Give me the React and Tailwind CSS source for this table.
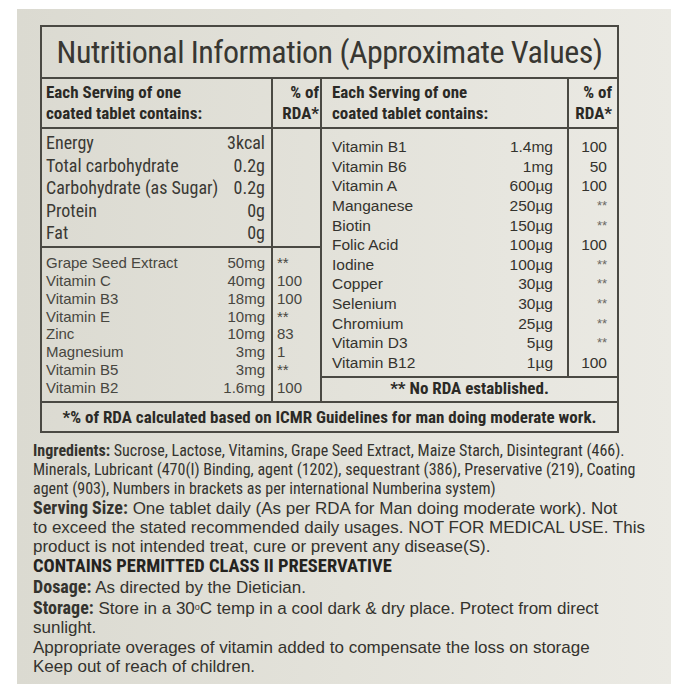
import React from 'react';

const NARROW = "font-['Roboto_Condensed','Open_Sans',sans-serif]";
const SANS = "font-['Liberation_Sans',Arial,sans-serif]";

const basics = [
  ['Energy', '3kcal'],
  ['Total carbohydrate', '0.2g'],
  ['Carbohydrate (as Sugar)', '0.2g'],
  ['Protein', '0g'],
  ['Fat', '0g'],
];

const leftNutrients = [
  ['Grape Seed Extract', '50mg', '**'],
  ['Vitamin C', '40mg', '100'],
  ['Vitamin B3', '18mg', '100'],
  ['Vitamin E', '10mg', '**'],
  ['Zinc', '10mg', '83'],
  ['Magnesium', '3mg', '1'],
  ['Vitamin B5', '3mg', '**'],
  ['Vitamin B2', '1.6mg', '100'],
];

const rightNutrients = [
  ['Vitamin B1', '1.4mg', '100'],
  ['Vitamin B6', '1mg', '50'],
  ['Vitamin A', '600µg', '100'],
  ['Manganese', '250µg', '**'],
  ['Biotin', '150µg', '**'],
  ['Folic Acid', '100µg', '100'],
  ['Iodine', '100µg', '**'],
  ['Copper', '30µg', '**'],
  ['Selenium', '30µg', '**'],
  ['Chromium', '25µg', '**'],
  ['Vitamin D3', '5µg', '**'],
  ['Vitamin B12', '1µg', '100'],
];

function HeaderCell({ className }) {
  return (
    <div className={`${NARROW} font-bold text-[17px] leading-[21px] text-[#2b2a26] ${className}`}>
      <div>Each Serving of one</div>
      <div>coated tablet contains:</div>
    </div>
  );
}

function RdaHead({ className }) {
  return (
    <div className={`${NARROW} font-bold text-[17px] leading-[21px] text-[#2b2a26] text-right ${className}`}>
      <div>% of</div>
      <div>RDA*</div>
    </div>
  );
}

export default function App() {
  return (
    <div className="min-h-[700px] bg-white pt-[9px] pl-[17px] overflow-hidden">
      <div className="w-[654px] h-[675px] bg-gradient-to-r from-[#dbdad1] via-[#e3e2da] to-[#ebeae4] pt-[16px] pl-[16px] overflow-hidden">
        {/* table */}
        <div className="ml-[7px] w-[579px] border-2 border-[#4a4943]">
          <div className={`${NARROW} h-[52px] border-b-2 border-[#4a4943] flex items-center justify-center text-[32px] tracking-[-0.5px] text-[#383732] whitespace-nowrap`}>
            Nutritional Information (Approximate Values)
          </div>

          <div className="flex h-[50px] border-b-2 border-[#4a4943]">
            <HeaderCell className="w-[231px] border-r-2 border-[#4a4943] pl-[4px] pt-[3px]" />
            <RdaHead className="w-[49px] border-r-2 border-[#4a4943] pr-[1px] pt-[3px]" />
            <HeaderCell className="w-[247px] border-r-2 border-[#4a4943] pl-[10px] pt-[3px]" />
            <RdaHead className="w-[48px] pr-[5px] pt-[3px]" />
          </div>

          <div className="flex border-b-2 border-[#4a4943]">
            {/* left half */}
            <div className="w-[280px] border-r-2 border-[#4a4943]">
              <div className="flex h-[119px] border-b-2 border-[#4a4943]">
                <div className={`${NARROW} w-[231px] border-r-2 border-[#4a4943] pl-[4px] pr-[6px] pt-[3px] text-[18px] text-[#3a3934] whitespace-nowrap`}>
                  {basics.map(([n, v]) => (
                    <div key={n} className="flex justify-between h-[22.5px] leading-[22.5px]">
                      <span>{n}</span>
                      <span>{v}</span>
                    </div>
                  ))}
                </div>
                <div className="w-[47px]" />
              </div>
              <div className="flex h-[153px]">
                <div className={`${SANS} w-[231px] border-r-2 border-[#4a4943] pl-[4px] pr-[6px] pt-[6px] text-[15px] text-[#47463f]`}>
                  {leftNutrients.map(([n, v]) => (
                    <div key={n} className="flex justify-between h-[17.86px] leading-[17.86px]">
                      <span>{n}</span>
                      <span>{v}</span>
                    </div>
                  ))}
                </div>
                <div className={`${SANS} w-[47px] pl-[4px] pt-[6px] text-[15px] text-[#47463f]`}>
                  {leftNutrients.map(([n, , r]) => (
                    <div key={n} className="h-[17.86px] leading-[17.86px]">{r}</div>
                  ))}
                </div>
              </div>
            </div>

            {/* right half */}
            <div className="w-[295px]">
              <div className="flex h-[249px] border-b-2 border-[#4a4943]">
                <div className={`${SANS} w-[247px] border-r-2 border-[#4a4943] pl-[10px] pr-[14px] pt-[8px] text-[15.5px] text-[#34332e]`}>
                  {rightNutrients.map(([n, v]) => (
                    <div key={n} className="flex justify-between h-[19.64px] leading-[19.64px]">
                      <span>{n}</span>
                      <span>{v}</span>
                    </div>
                  ))}
                </div>
                <div className={`${SANS} w-[48px] pr-[10px] pt-[8px] text-[15.5px] text-[#34332e] text-right`}>
                  {rightNutrients.map(([n, , r]) => (
                    <div key={n} className={`h-[19.64px] leading-[19.64px] ${r === '**' ? 'text-[#6a6963] text-[13px]' : ''}`}>{r}</div>
                  ))}
                </div>
              </div>
              <div className={`${NARROW} h-[21px] leading-[21px] font-bold text-[17px] text-[#2b2a26] text-center whitespace-nowrap`}>
                ** No RDA established.
              </div>
            </div>
          </div>

          <div className={`${NARROW} h-[28px] leading-[28px] font-bold text-[17px] text-[#2b2a26] text-center whitespace-nowrap`}>
            *% of RDA calculated based on ICMR Guidelines for man doing moderate work.
          </div>
        </div>

        {/* text below the table */}
        <div className="mt-[8px] text-[#34332e] whitespace-nowrap">
          <div className={`${NARROW} text-[16px] leading-[19px]`}>
            <div><span className="font-bold">Ingredients:</span> Sucrose, Lactose, Vitamins, Grape Seed Extract, Maize Starch, Disintegrant (466).</div>
            <div>Minerals, Lubricant (470(I) Binding, agent (1202), sequestrant (386), Preservative (219), Coating</div>
            <div>agent (903), Numbers in brackets as per international Numberina system)</div>
          </div>
          <div className={`${SANS} text-[17px] leading-[19px]`}>
            <div><span className={`${NARROW} font-bold text-[18px]`}>Serving Size:</span> One tablet daily (As per RDA for Man doing moderate work). Not</div>
            <div>to exceed the stated recommended daily usages. NOT FOR MEDICAL USE. This</div>
            <div>product is not intended treat, cure or prevent any disease(S).</div>
          </div>
          <div className={`${NARROW} font-bold text-[18.5px] leading-[21px] text-[#24231f]`}>
            CONTAINS PERMITTED CLASS II PRESERVATIVE
          </div>
          <div className={`${SANS} text-[17px] leading-[19px]`}>
            <span className={`${NARROW} font-bold text-[18px]`}>Dosage:</span> As directed by the Dietician.
          </div>
          <div className={`${SANS} text-[17px] leading-[19px] mt-[1px]`}>
            <div>
              <span className={`${NARROW} font-bold text-[18px]`}>Storage:</span> Store in a 30<sup className="text-[9px]">o</sup>C temp in a cool dark &amp; dry place. Protect from direct
            </div>
            <div>sunlight.</div>
          </div>
          <div className={`${SANS} text-[17px] leading-[19px] mt-[1px]`}>
            <div>Appropriate overages of vitamin added to compensate the loss on storage</div>
            <div>Keep out of reach of children.</div>
          </div>
        </div>
      </div>
    </div>
  );
}
